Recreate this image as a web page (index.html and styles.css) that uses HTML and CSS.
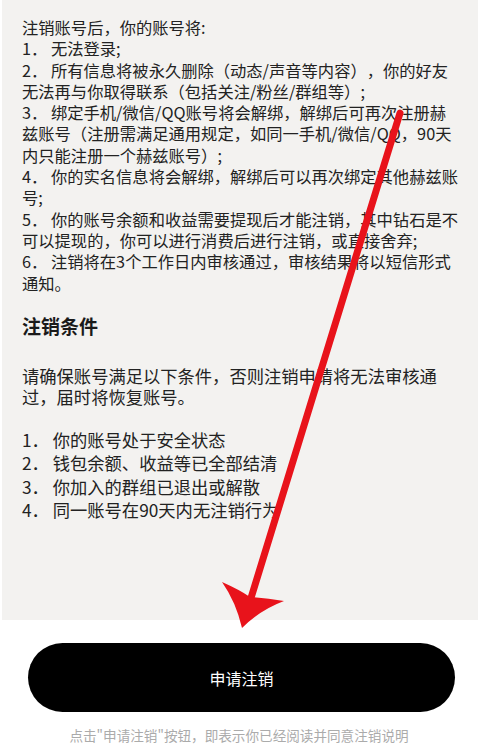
FILE: index.html
```html
<!DOCTYPE html>
<html lang="zh-CN">
<head>
<meta charset="utf-8">
<title>注销账号</title>
<link rel="stylesheet" href="styles.css">
</head>
<body>
<div class="page">
  <section class="panel">
    <p class="intro">注销账号后，你的账号将:<br>1． 无法登录;<br>2． 所有信息将被永久删除（动态/声音等内容），你的好友无法再与你取得联系（包括关注/粉丝/群组等）;<br>3． 绑定手机/微信/QQ账号将会解绑，解绑后可再次注册赫兹账号（注册需满足通用规定，如同一手机/微信/QQ，90天内只能注册一个赫兹账号）;<br>4． 你的实名信息将会解绑，解绑后可以再次绑定其他赫兹账号;<br>5． 你的账号余额和收益需要提现后才能注销，其中钻石是不可以提现的，你可以进行消费后进行注销，或直接舍弃;<br>6． 注销将在3个工作日内审核通过，审核结果将以短信形式通知。</p>
    <h2 class="title">注销条件</h2>
    <p class="desc">请确保账号满足以下条件，否则注销申请将无法审核通过，届时将恢复账号。</p>
    <ul class="conds">
      <li>1． 你的账号处于安全状态</li>
      <li>2． 钱包余额、收益等已全部结清</li>
      <li>3． 你加入的群组已退出或解散</li>
      <li>4． 同一账号在90天内无注销行为</li>
    </ul>
  </section>
  <button class="apply">申请注销</button>
  <p class="note">点击"申请注销"按钮，即表示你已经阅读并同意注销说明</p>
  <svg class="arrow" width="478" height="752" viewBox="0 0 478 752">
    <line x1="400" y1="113" x2="251" y2="598" stroke="#e8131b" stroke-width="7" stroke-linecap="round"/>
    <path d="M242,628 Q236,602 222,582 Q240,590 250,597 Q266,598 284,601 Q260,610 242,628 Z" fill="#e8131b"/>
  </svg>
</div>
</body>
</html>
```
FILE: styles.css
```css
* { box-sizing: border-box; }
html, body { margin: 0; padding: 0; background: #ffffff; }
body {
  font-family: "Noto Sans CJK SC", "Noto Sans", sans-serif;
  color: #222222;
  text-spacing-trim: space-all;
}
.page { position: relative; width: 478px; height: 752px; overflow: hidden; }
.panel {
  margin-left: 2px;
  height: 620px;
  background: #f3f2f0;
  padding: 17px 20px 0 20px;
}
.intro {
  margin: 0;
  font-size: 16.3px;
  line-height: 21.3px;
}
.title {
  margin: 19px 0 0;
  font-size: 19px;
  line-height: 26px;
  font-weight: 700;
  color: #1a1a1a;
}
.desc {
  margin: 26px 0 0;
  font-size: 17.3px;
  line-height: 21.5px;
}
.conds {
  list-style: none;
  margin: 20px 0 0;
  padding: 0;
  font-size: 17.3px;
  line-height: 23.5px;
}
.apply {
  display: block;
  margin: 23px 0 0 28px;
  width: 427px;
  height: 69px;
  border: none;
  border-radius: 35px;
  background: #000000;
  color: #ffffff;
  font-family: "Noto Sans CJK SC", "Noto Sans", sans-serif;
  font-size: 16px;
  padding: 0;
}
.note {
  margin: 14px 0 0;
  text-align: center;
  font-size: 13.6px;
  line-height: 18px;
  color: #ababab;
}
.arrow { position: absolute; left: 0; top: 0; pointer-events: none; }
```
